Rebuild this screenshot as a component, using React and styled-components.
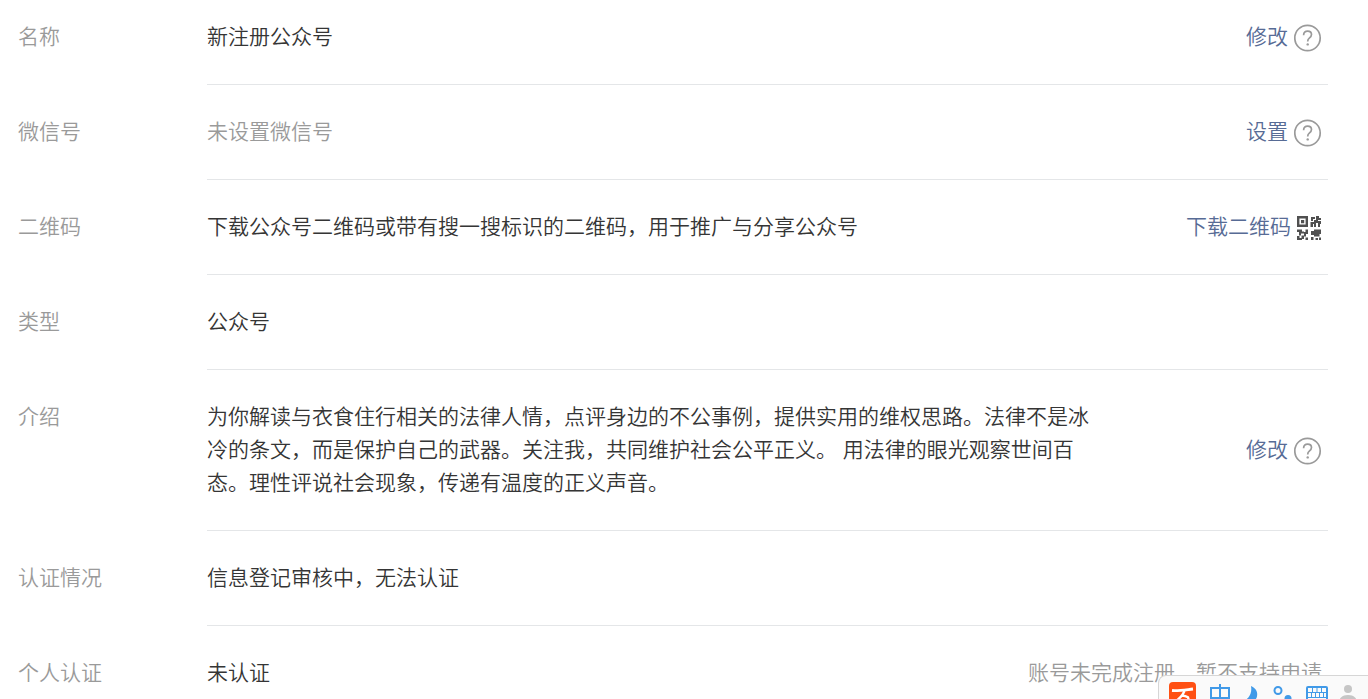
import React from "react";
import styled, { createGlobalStyle } from "styled-components";

const GlobalStyle = createGlobalStyle`
  body {
    margin: 0;
    background: #fff;
    color: #353535;
    font-family: "Liberation Sans", "Noto Sans CJK SC", sans-serif;
    font-size: 21px;
    font-weight: 350;
    line-height: 33px;
    overflow: hidden;
  }
`;

const Settings = styled.dl`
  margin: 0;
  padding: 0 40px 0 18px;
`;

const Row = styled.div`
  display: flex;

  &:first-child > * {
    padding-top: 20px;
  }
`;

const Label = styled.dt`
  flex: 0 0 189px;
  padding: 30px 0 31px;
  color: #9a9a9a;
`;

const Detail = styled.dd`
  flex: 1;
  display: flex;
  align-items: center;
  justify-content: space-between;
  margin: 0;
  padding: 30px 6px 31px 0;
  border-bottom: 1px solid #e4e6e8;
`;

const Value = styled.span`
  max-width: 42em;
  color: ${(p) => (p.$muted ? "#9a9a9a" : "inherit")};
`;

const Actions = styled.span`
  display: flex;
  align-items: center;
  gap: 6px;
  flex: none;
  color: #9a9a9a;
`;

const ActionLink = styled.a`
  color: #576b95;
  text-decoration: none;
`;

const IconButton = styled.button`
  display: flex;
  margin: 0;
  padding: 3px 0 0;
  border: 0;
  background: none;
  color: #9a9a9a;
  cursor: pointer;
`;

const Toolbar = styled.div`
  position: fixed;
  right: 0;
  bottom: -16px;
  display: flex;
  gap: 11px;
  box-sizing: border-box;
  height: 40px;
  padding: 6px 9px 0 10px;
  border: 1px solid #d6d6d6;
  border-right: 0;
  border-radius: 8px 0 0 8px;
  background: #fafafa;
`;

const ToolIcon = styled.svg`
  display: block;
  flex: none;
`;

function Help({ label }) {
  return (
    <IconButton type="button" aria-label={label}>
      <svg width="28" height="28" viewBox="0 0 28 28" fill="none" stroke="currentColor">
        <circle cx="13.5" cy="14" r="12.7" strokeWidth="1.7" />
        <path d="M9.6 11.2c0-2.5 1.6-4.1 4-4.1 2.3 0 3.9 1.400 3.900 3.500 0 1.700-.9 2.600-2.200 3.600-1.200.9-1.600 1.600-1.600 3.200" strokeWidth="1.700" />
        <circle cx="13.700" cy="20.400" r="1.200" fill="currentColor" stroke="none" />
      </svg>
    </IconButton>
  );
}

function QrCode() {
  return (
    <IconButton type="button" aria-label="查看二维码">
      <svg width="25" height="25" viewBox="0 0 25 25" fill="#505050">
        <path fillRule="evenodd" d="M0 0h11v11H0zM2.400 2.400v6.200h6.200V2.400zM4 4h3.200v3.200H4z" />
        <path d="M14 1h4v2h-2v2h-2zM19 0h3v2h2v2h-3v1h3v3h-1v3h-2V7h-2v4h-2V8h-1v3h-2.500V6H17V4h2z" />
        <path d="M0 13.500h5v2h2v2H4v2H2V16H0zM8.500 13.500H11v4.500H9v2.500H7V23H4.500v-3.500H7V16h1.500zM0 20h2.500v2H5v2H0zM8.500 21.500H11V24H8.500z" />
        <path d="M17 13.500h7V18h-1.500v2.500H17V19h-3v-4h3zM14 21h2.500v3H14zM18.500 22h2.500v2h-2.500zM22 21.500h2V24h-2z" />
      </svg>
    </IconButton>
  );
}

function InputToolbar() {
  return (
    <Toolbar role="toolbar" aria-label="输入法">
      <ToolIcon width="27" height="28" viewBox="0 0 27 28">
        <rect width="27" height="27" rx="4" fill="#ff5013" />
        <path d="M3 8.500c6 .6 13-.6 21-1.500" fill="none" stroke="#fff" strokeWidth="2.800" />
        <path d="M15.500 9c-2 4.500-5 8-10 11M12.500 13.500c3 .2 5 .8 6.500 1.800 1 2-.5 5-3 7" fill="none" stroke="#fff" strokeWidth="2.400" />
      </ToolIcon>
      <ToolIcon width="24" height="28" viewBox="0 0 24 28" fill="none" stroke="#419ae8" strokeWidth="2">
        <path d="M4 6h18v10H4zM13 2v24" />
      </ToolIcon>
      <ToolIcon width="20" height="28" viewBox="0 0 20 28" fill="#419ae8">
        <path d="M9 4c5.500 2.500 7.500 7 5.500 12-3 6-9 7-14 3.500 6-2 10-8 8.500-15.500z" />
      </ToolIcon>
      <ToolIcon width="22" height="28" viewBox="0 0 22 28">
        <circle cx="5" cy="8.500" r="3.500" fill="none" stroke="#419ae8" strokeWidth="2" />
        <circle cx="15" cy="16.500" r="3.500" fill="#419ae8" />
      </ToolIcon>
      <ToolIcon width="22" height="28" viewBox="0 0 22 28" fill="none" stroke="#419ae8">
        <rect x="1" y="5" width="20" height="17" rx="1" strokeWidth="2" />
        <path d="M2 10.500h18M2 15.500h18M6.500 5v5M11 5v5M15.500 5v5M5.500 10.500v5M9.500 10.500v5M13.500 10.500v5M17.500 10.500v5" />
      </ToolIcon>
      <ToolIcon width="20" height="28" viewBox="0 0 20 28" fill="#c6c6c6">
        <circle cx="9" cy="7" r="4" />
        <path d="M0 21c0-5 3-8 9-8s9 3 9 8z" />
      </ToolIcon>
    </Toolbar>
  );
}

const rows = [
  { label: "名称", value: "新注册公众号", action: "修改", icon: <Help label="名称说明" /> },
  { label: "微信号", value: "未设置微信号", muted: true, action: "设置", icon: <Help label="微信号说明" /> },
  {
    label: "二维码",
    value: "下载公众号二维码或带有搜一搜标识的二维码，用于推广与分享公众号",
    action: "下载二维码",
    icon: <QrCode />,
  },
  { label: "类型", value: "公众号" },
  {
    label: "介绍",
    value:
      "为你解读与衣食住行相关的法律人情，点评身边的不公事例，提供实用的维权思路。法律不是冰冷的条文，而是保护自己的武器。关注我，共同维护社会公平正义。 用法律的眼光观察世间百态。理性评说社会现象，传递有温度的正义声音。",
    action: "修改",
    icon: <Help label="介绍说明" />,
  },
  { label: "认证情况", value: "信息登记审核中，无法认证" },
  { label: "个人认证", value: "未认证", note: "账号未完成注册，暂不支持申请" },
];

export default function App() {
  return (
    <>
      <GlobalStyle />
      <main lang="zh-CN">
        <Settings>
          {rows.map((row) => (
            <Row key={row.label}>
              <Label>{row.label}</Label>
              <Detail>
                <Value $muted={row.muted}>{row.value}</Value>
                <Actions>
                  {row.note}
                  {row.action && <ActionLink href="#">{row.action}</ActionLink>}
                  {row.icon}
                </Actions>
              </Detail>
            </Row>
          ))}
        </Settings>
      </main>
      <InputToolbar />
    </>
  );
}
